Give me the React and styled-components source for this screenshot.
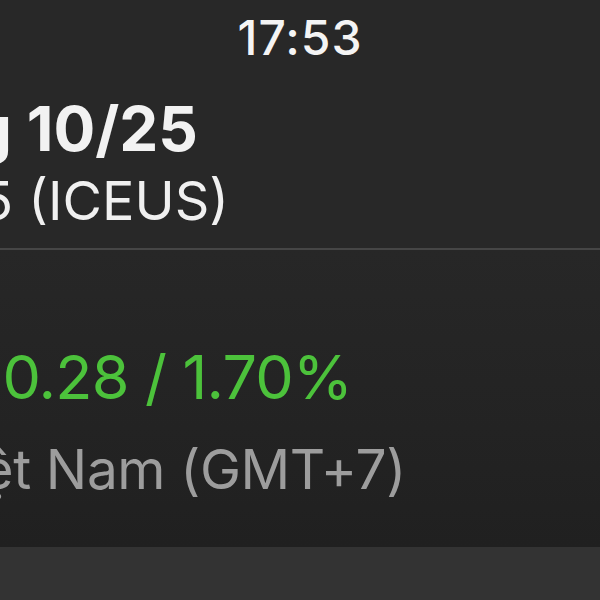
import React from 'react'
import styled, {createGlobalStyle} from 'styled-components'

const Global = createGlobalStyle`
    html, body {
        margin: 0;
        padding: 0;
        background: #282828;
    }
    body {
        font-family: Inter, "Noto Sans", "Liberation Sans", sans-serif;
    }
`

const Screen = styled.div`
    width: 600px;
    height: 600px;
    overflow: hidden;
    display: flex;
    flex-direction: column;
    background: #282828;
`

const Header = styled.div`
    height: 248px;
    display: flex;
    flex-direction: column;
    background: #282828;
    border-bottom: 2px solid #464646;
`

const StatusBar = styled.div`
    padding-top: 14px;
    display: flex;
    justify-content: center;
    color: #f4f4f4;
    font-size: 48px;
    font-weight: 500;
    line-height: 48px;
    letter-spacing: 1px;
`

// right edge is fixed, the start of each line runs off the left side of the screen
const Line = styled.div`
    width: ${p => p.end}px;
    display: flex;
    justify-content: flex-end;
    white-space: nowrap;
    margin-top: ${p => p.top}px;
    font-size: ${p => p.size}px;
    line-height: ${p => p.size}px;
    font-weight: ${p => p.bold ? 700 : 400};
    letter-spacing: ${p => p.track || 0}px;
    color: ${p => p.color};
`

const Quote = styled.div`
    flex: 1;
    display: flex;
    flex-direction: column;
    background: linear-gradient(180deg, #272727 0%, #232323 60%, #202020 100%);
`

const BottomBar = styled.div`
    height: 53px;
    background: #333333;
`

export default function App(){
    return <Screen>
        <Global />
        <Header>
            <StatusBar>17:53</StatusBar>
            <Line end={198} top={36} size={62} bold color="#f2f2f2">Tháng 10/25</Line>
            <Line end={229} top={14} size={54} color="#f0f0f0">SBV25 (ICEUS)</Line>
        </Header>
        <Quote>
            <Line end={352} top={97} size={61} track={-0.8} color="#4cc23b">+0.28 / 1.70%</Line>
            <Line end={406} top={34} size={55} track={-0.4} color="#9d9d9d">Giờ Việt Nam (GMT+7)</Line>
        </Quote>
        <BottomBar />
    </Screen>
}
